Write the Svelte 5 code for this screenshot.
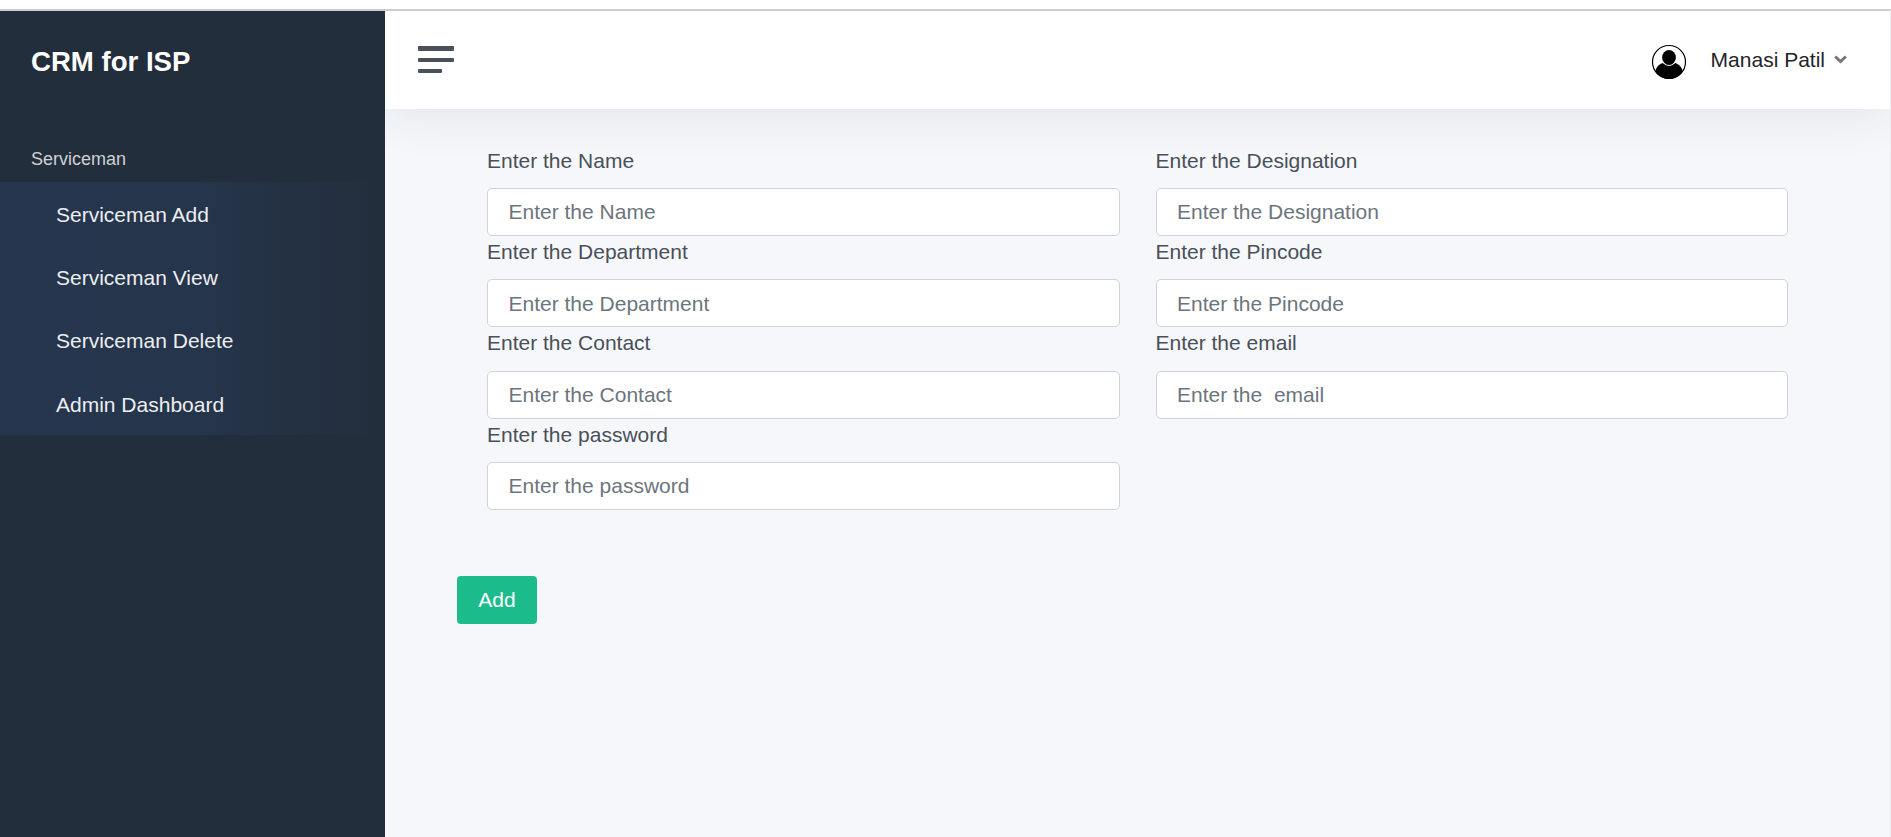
<script>
  const links = ['Serviceman Add', 'Serviceman View', 'Serviceman Delete', 'Admin Dashboard'];
  const fields = [
    { label: 'Enter the Name' },
    { label: 'Enter the Designation' },
    { label: 'Enter the Department' },
    { label: 'Enter the Pincode' },
    { label: 'Enter the Contact' },
    { label: 'Enter the email', hint: 'Enter the  email' },
    { label: 'Enter the password', type: 'password' }
  ];
</script>

<div class="page">
  <aside>
    <h1>CRM for ISP</h1>
    <div class="section">Serviceman</div>
    <nav>
      {#each links as link}
        <a href="#top">{link}</a>
      {/each}
    </nav>
  </aside>
  <div class="content">
    <header>
      <button class="menu" aria-label="Menu"><span></span><span></span><span></span></button>
      <div class="user">
        <svg class="avatar" width="36" height="36" viewBox="0 0 36 36">
          <defs><clipPath id="ring"><circle cx="18" cy="18" r="17" /></clipPath></defs>
          <circle cx="18" cy="18" r="16.5" fill="#fff" stroke="#000" stroke-width="1.200" />
          <g clip-path="url(#ring)">
            <path d="M3.500 36V30C4.500 24 7.500 20.500 11.500 19H24.500C28.500 20.500 31.500 24 32.500 30V36Z" />
          </g>
          <ellipse cx="18" cy="13.600" rx="8" ry="8.500" fill="#fff" />
          <ellipse cx="18" cy="13.500" rx="6.900" ry="7.600" />
        </svg>
        <span class="name">Manasi Patil</span>
        <svg class="chev" width="13" height="9" viewBox="0 0 13 9"><path d="M1.200 1.500L6.500 6.500L11.800 1.500" fill="none" stroke="#777" stroke-width="3" /></svg>
      </div>
    </header>
    <main>
      <form>
        <div class="grid">
          {#each fields as f, i}
            <div class="field">
              <label for={'f' + i}>{f.label}</label>
              <input id={'f' + i} type={f.type ?? 'text'} placeholder={f.hint ?? f.label} />
            </div>
          {/each}
        </div>
        <button class="add" type="button">Add</button>
      </form>
    </main>
  </div>
</div>

<style>
  :global(body) {
    margin: 0;
    overflow: hidden;
  }
  .page {
    box-sizing: border-box;
    height: 837px;
    display: flex;
    padding-top: 9px;
    background: #fff;
    font: 21px/31.5px 'Liberation Sans', Arial, sans-serif;
    color: #495057;
  }
  aside {
    width: 385px;
    flex: none;
    background: #232e3c;
    border-top: 2px solid #ccc;
  }
  h1 {
    margin: 0;
    padding: 31px 31px 0;
    font-size: 27.6px;
    line-height: 40px;
    color: #fff;
  }
  .section {
    padding: 64px 31px 9px;
    font-size: 18px;
    line-height: 27px;
    color: #ced1d4;
  }
  nav {
    display: flex;
    flex-direction: column;
    height: 253px;
    background: linear-gradient(90deg, #25364f 0%, #25354b 50%, #232e3c 100%);
  }
  nav a {
    flex: 1;
    display: flex;
    align-items: center;
    padding: 2px 0 0 56px;
    color: #eceef0;
    text-decoration: none;
  }
  .content {
    flex: 1;
    display: flex;
    flex-direction: column;
    overflow: hidden;
    background: #f5f7fb;
    border-top: 2px solid #ccc;
    border-right: 1px solid #ebecf0;
  }
  header {
    flex: none;
    box-sizing: border-box;
    height: 98px;
    display: flex;
    align-items: flex-start;
    justify-content: space-between;
    padding: 32px 43px 0 33px;
    background: #fff;
    box-shadow: 0 6px 48px rgba(35, 46, 60, 0.09);
  }
  .menu {
    margin-top: 3px;
    padding: 0;
    border: 0;
    background: none;
    display: flex;
    flex-direction: column;
    gap: 7px;
  }
  .menu span {
    width: 36px;
    height: 4px;
    border-radius: 1px;
    background: #495057;
  }
  .menu span:first-child {
    height: 5px;
  }
  .menu span:last-child {
    width: 24px;
  }
  .user {
    display: flex;
    align-items: flex-start;
  }
  .avatar {
    margin: 1px 24px 0 0;
  }
  .name {
    margin-top: 1px;
    color: #212529;
  }
  .chev {
    margin: 12px 0 0 9px;
  }
  form {
    padding: 35.8px 102px 0 102px;
  }
  .grid {
    display: grid;
    grid-template-columns: 1fr 1fr;
    column-gap: 36px;
  }
  .field {
    height: 91.3px;
  }
  label {
    display: block;
    margin-bottom: 11.8px;
  }
  input {
    display: block;
    box-sizing: border-box;
    width: 100%;
    height: 48px;
    padding: 0.3px 20px 0 20.500px;
    border: 1px solid #ced4da;
    border-radius: 5px;
    background: #fff;
    font: inherit;
  }
  input::placeholder {
    color: #6c757d;
    opacity: 1;
  }
  .add {
    display: block;
    width: 80px;
    height: 48px;
    margin: 66px 0 0 -30px;
    padding: 0;
    border: 0;
    border-radius: 4px;
    background: #1cbb8c;
    color: #fff;
    font: inherit;
  }
</style>
